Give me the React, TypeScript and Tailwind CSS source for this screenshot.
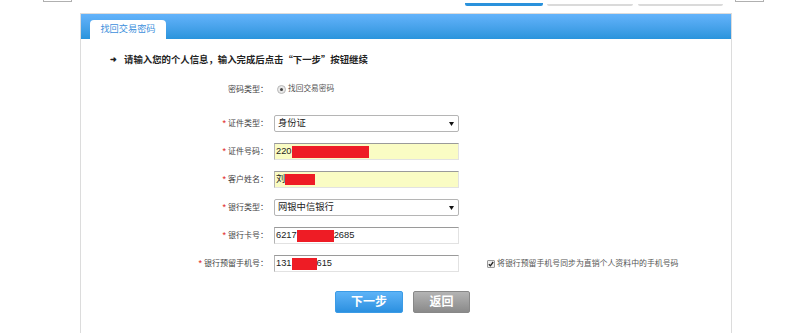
import React from 'react';

const FONT = '"Liberation Sans", "Noto Sans CJK SC", sans-serif';
const CJK = '"Noto Sans CJK SC", sans-serif';

const Label = ({ text, star = true }: { text: string; star?: boolean }) => (
    <div className="w-[187px] shrink-0 text-right text-[8px] leading-[17px] text-[#444]">
        {star && <span className="mr-[2px] text-[9px] text-[#e02020]">*</span>}
        {text}
    </div>
);

const Redact = ({ w, h }: { w: number; h: number }) => (
    <span className="inline-block bg-[#ee1c25] align-middle" style={{ width: w, height: h }} />
);

const SelectBox = ({ value }: { value: string }) => (
    <div className="ml-[6px] flex h-[17px] w-[185px] items-center justify-between rounded-[2px] border border-[#b5b5b5] bg-white pl-[3px] pr-[4px] text-[9.3px] text-[#222]">
        <span>{value}</span>
        <svg width="5" height="4" viewBox="0 0 5 4">
            <path d="M0 0 L5 0 L2.5 4 Z" fill="#111" />
        </svg>
    </div>
);

const TextBox = ({ children, yellow = false }: { children: React.ReactNode; yellow?: boolean }) => (
    <div
        className={`ml-[6px] flex h-[17px] w-[185px] items-center border border-t-[#9a9a9a] border-l-[#b4b4b4] border-r-[#e2e2e2] border-b-[#e2e2e2] pl-[1px] text-[9.3px] text-[#222] ${
            yellow ? 'bg-[#fafcc4]' : 'bg-white'
        }`}
    >
        {children}
    </div>
);

export default function App() {
    return (
        <div className="h-[333px] w-[796px] overflow-hidden bg-white" style={{ fontFamily: FONT }}>
            {/* 顶部残留的导航条 */}
            <div className="flex h-[13px] items-start">
                <div className="ml-[43px] h-[2px] w-[29px] border border-t-0 border-[#b0b0b0]" />
                <div className="ml-[393px] mt-[3px] h-[3px] w-[78px] rounded-b-[2px] bg-[#2a92dc]" />
                <div className="ml-[4px] mt-[4px] h-[2px] w-[86px] rounded-b-[2px] bg-[#dadada]" />
                <div className="ml-[5px] mt-[4px] h-[2px] w-[85px] rounded-b-[2px] bg-[#dadada]" />
                <div className="ml-[12px] h-[2px] w-[29px] border border-t-0 border-[#b0b0b0]" />
            </div>

            {/* 主面板 */}
            <div className="ml-[80px] h-[320px] w-[652px] border border-b-0 border-[#dcdcdc]">
                <div className="flex h-[25px] items-end bg-gradient-to-b from-[#63b3fb] to-[#2994dc]">
                    <div className="ml-[9px] flex h-[19px] w-[76px] items-center justify-center rounded-t-[4px] bg-white text-[9.2px] text-[#3d8fdc]">
                        找回交易密码
                    </div>
                </div>

                <div className="pt-[13px]">
                    <div
                        className="flex h-[14px] items-center pl-[29px] text-[9.4px] font-bold text-[#222]"
                        style={{ fontFamily: CJK }}
                    >
                        <span className="mr-[7px] text-[8px]">➜</span>
                        请输入您的个人信息，输入完成后点击“下一步”按钮继续
                    </div>

                    <div className="mt-[16px] flex h-[14px] items-center">
                        <Label text="密码类型：" star={false} />
                        <span className="ml-[9px] flex h-[9px] w-[9px] items-center justify-center rounded-full border border-[#b8b8b8] bg-[#e8e8e8]">
                            <span className="h-[3px] w-[3px] rounded-full bg-[#444]" />
                        </span>
                        <span className="ml-[2px] text-[7.7px] text-[#555]">找回交易密码</span>
                    </div>

                    <div className="mt-[19px] flex flex-col gap-[11px]">
                        <div className="flex h-[17px] items-center">
                            <Label text="证件类型：" />
                            <SelectBox value="身份证" />
                        </div>
                        <div className="flex h-[17px] items-center">
                            <Label text="证件号码：" />
                            <TextBox yellow>
                                <span>220</span>
                                <Redact w={77} h={12} />
                            </TextBox>
                        </div>
                        <div className="flex h-[17px] items-center">
                            <Label text="客户姓名：" />
                            <TextBox yellow>
                                <span>刘</span>
                                <Redact w={30} h={11} />
                            </TextBox>
                        </div>
                        <div className="flex h-[17px] items-center">
                            <Label text="银行类型：" />
                            <SelectBox value="网银中信银行" />
                        </div>
                        <div className="flex h-[17px] items-center">
                            <Label text="银行卡号：" />
                            <TextBox>
                                <span>6217</span>
                                <Redact w={37} h={12} />
                                <span>2685</span>
                            </TextBox>
                        </div>
                        <div className="flex h-[17px] items-center">
                            <Label text="银行预留手机号：" />
                            <TextBox>
                                <span>131</span>
                                <Redact w={25} h={12} />
                                <span>615</span>
                            </TextBox>
                            <span className="ml-[28px] flex h-[8px] w-[8px] items-center justify-center rounded-[1px] border border-[#999] bg-[#eee]">
                                <svg width="6" height="6" viewBox="0 0 6 6">
                                    <path d="M0.8 3.2 L2.4 4.8 L5.2 1" stroke="#222" strokeWidth="1.3" fill="none" />
                                </svg>
                            </span>
                            <span className="ml-[2px] text-[7.9px] text-[#555]">
                                将银行预留手机号同步为直销个人资料中的手机号码
                            </span>
                        </div>
                    </div>

                    <div className="ml-[254px] mt-[19px] flex gap-[10px]">
                        <button className="flex h-[22px] w-[68px] items-center justify-center rounded-[2px] border border-[#3b9be6] bg-gradient-to-b from-[#5cb3f7] to-[#2a90e0] text-[12px] font-bold text-white">
                            下一步
                        </button>
                        <button className="flex h-[22px] w-[57px] items-center justify-center rounded-[2px] border border-[#888] bg-gradient-to-b from-[#b4b4b4] to-[#8a8a8a] text-[12px] font-bold text-white">
                            返回
                        </button>
                    </div>
                </div>
            </div>
        </div>
    );
}
